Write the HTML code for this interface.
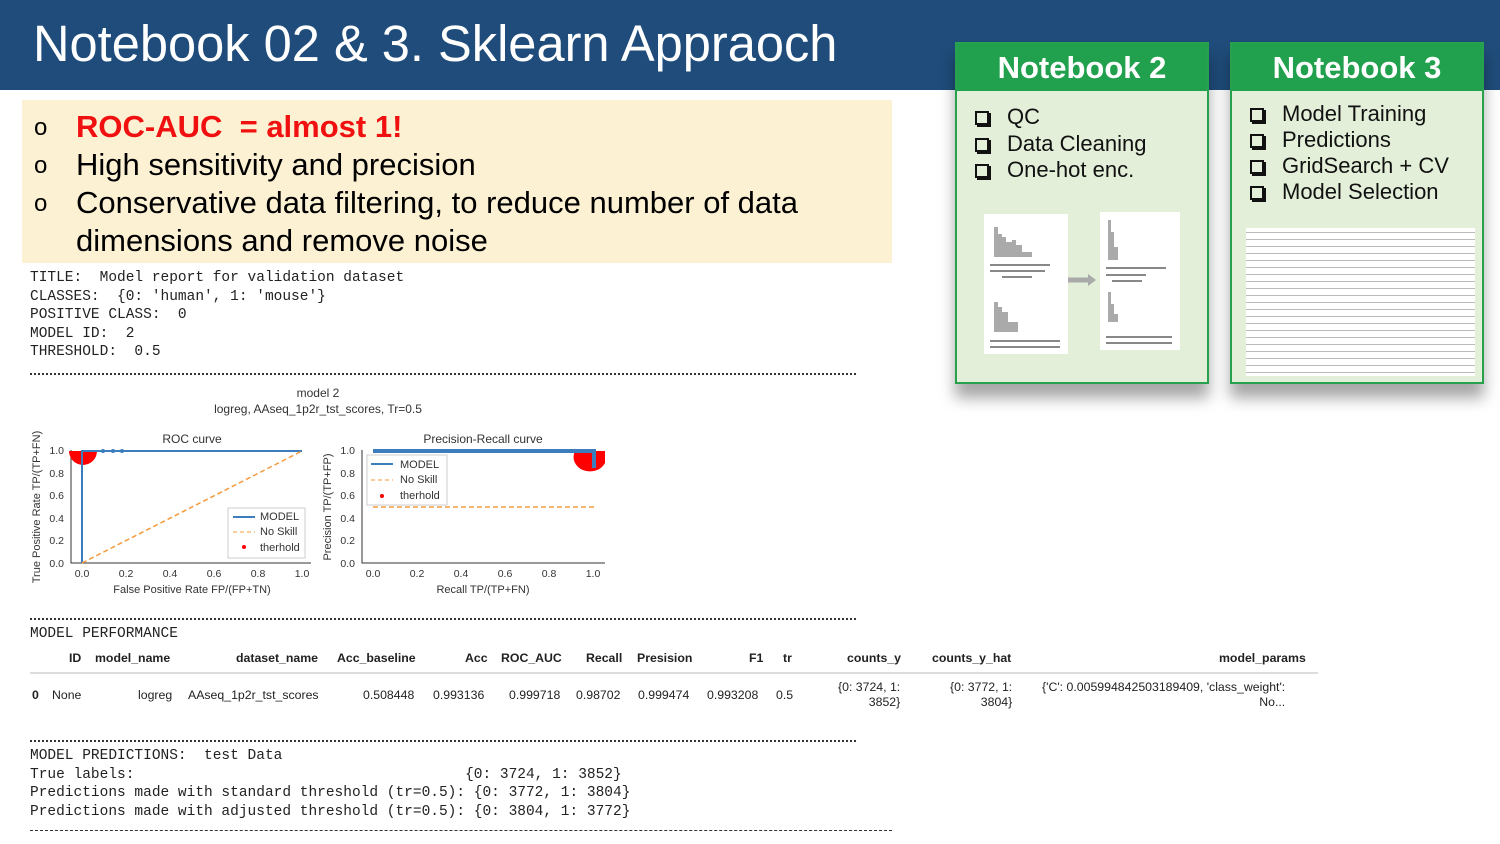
<!DOCTYPE html>
<html><head><meta charset="utf-8"><style>
*{margin:0;padding:0;box-sizing:border-box}
body{width:1500px;height:844px;background:#fff;position:relative;overflow:hidden;font-family:"Liberation Sans",sans-serif}
.abs{position:absolute}
.bar{left:0;top:0;width:1500px;height:90px;background:#1f4c7a}
.title{left:33px;top:14px;color:#fff;font-size:50.6px;white-space:nowrap}
.yel{left:22px;top:100px;width:870px;height:163px;background:#fdf1d3}
.bl{font-size:31px;color:#000;white-space:nowrap}
.mono{font-family:"Liberation Mono",monospace;font-size:14.5px;color:#222;white-space:pre;line-height:18.5px}
.dots{height:0;border-top:2px dotted #333}
.nb{background:#e3efd9;border:2px solid #27a14e;box-shadow:0 14px 14px rgba(0,0,0,.35)}
.nbh{background:#21a04d;color:#fff;font-weight:bold;font-size:31px;text-align:center;height:47px;line-height:47px}
.it{font-size:22px;color:#111;white-space:nowrap;line-height:26px}
.it span{display:inline-block;width:14px;height:14px;border:2px solid #111;box-shadow:2px 2px 0 #111;margin-right:18px;vertical-align:-1px}
.t{font-size:12.3px;color:#222;white-space:nowrap}
.th{font-weight:bold}
</style></head><body>
<div class="abs bar"></div>
<div class="abs title">Notebook 02 &amp; 3. Sklearn Appraoch</div>
<div class="abs yel"></div>
<div class="abs bl" style="left:34px;top:114px;font-size:24px">o</div>
<div class="abs bl" style="left:76px;top:109px;color:#f01010;font-weight:bold">ROC-AUC&nbsp; = almost 1!</div>
<div class="abs bl" style="left:34px;top:152px;font-size:24px">o</div>
<div class="abs bl" style="left:76px;top:147px">High sensitivity and precision</div>
<div class="abs bl" style="left:34px;top:190px;font-size:24px">o</div>
<div class="abs bl" style="left:76px;top:185px">Conservative data filtering, to reduce number of data</div>
<div class="abs bl" style="left:76px;top:223px">dimensions and remove noise</div>

<div class="abs mono" style="left:30px;top:269px">TITLE:  Model report for validation dataset
CLASSES:  {0: 'human', 1: 'mouse'}
POSITIVE CLASS:  0
MODEL ID:  2
THRESHOLD:  0.5</div>
<div class="abs dots" style="left:30px;top:373px;width:826px"></div>

<svg class="abs" style="left:0;top:380px" width="620" height="220" font-family="Liberation Sans" font-size="11" fill="#333">
<text x="318" y="17" text-anchor="middle" font-size="12">model 2</text>
<text x="318" y="33" text-anchor="middle" font-size="12">logreg, AAseq_1p2r_tst_scores, Tr=0.5</text>
<text x="192" y="63" text-anchor="middle" font-size="12">ROC curve</text>
<text x="483" y="63" text-anchor="middle" font-size="12">Precision-Recall curve</text>
<g stroke="#333" fill="none"><path d="M71 70V183H311"/><path d="M362 70V183H605"/></g>
<g font-size="10.5" text-anchor="end">
<text x="64" y="74">1.0</text><text x="64" y="97">0.8</text><text x="64" y="119">0.6</text><text x="64" y="142">0.4</text><text x="64" y="164">0.2</text><text x="64" y="187">0.0</text>
<text x="355" y="74">1.0</text><text x="355" y="97">0.8</text><text x="355" y="119">0.6</text><text x="355" y="142">0.4</text><text x="355" y="164">0.2</text><text x="355" y="187">0.0</text></g>
<g font-size="10.5" text-anchor="middle">
<text x="82" y="197">0.0</text><text x="126" y="197">0.2</text><text x="170" y="197">0.4</text><text x="214" y="197">0.6</text><text x="258" y="197">0.8</text><text x="302" y="197">1.0</text>
<text x="373" y="197">0.0</text><text x="417" y="197">0.2</text><text x="461" y="197">0.4</text><text x="505" y="197">0.6</text><text x="549" y="197">0.8</text><text x="593" y="197">1.0</text></g>
<text x="192" y="213" text-anchor="middle">False Positive Rate  FP/(FP+TN)</text>
<text x="483" y="213" text-anchor="middle">Recall TP/(TP+FN)</text>
<text transform="translate(40,127) rotate(-90)" text-anchor="middle">True Positive Rate TP/(TP+FN)</text>
<text transform="translate(331,127) rotate(-90)" text-anchor="middle">Precision TP/(TP+FP)</text>
<path d="M69 71h28a14 14 0 0 1-28 0z" fill="#f00"/>
<path d="M575 71h30v12a16 14 0 0 1-30-12z" fill="#f00"/>
<path d="M82 183V71H302" stroke="#3b7dbd" stroke-width="2" fill="none"/>
<g fill="#3b7dbd"><circle cx="103" cy="71" r="2"/><circle cx="113" cy="71" r="2"/><circle cx="122" cy="71" r="2"/></g>
<path d="M82 183L302 71" stroke="#f59a3c" stroke-width="1.5" stroke-dasharray="5 3"/>
<path d="M373 71H594V88" stroke="#3b7dbd" stroke-width="4" fill="none"/>
<path d="M373 127H594" stroke="#f59a3c" stroke-width="1.5" stroke-dasharray="5 3"/>
<rect x="228" y="128" width="77" height="50" fill="#fff" stroke="#ccc"/>
<path d="M233 137h22" stroke="#3b7dbd" stroke-width="2"/><path d="M233 152h22" stroke="#f59a3c" stroke-dasharray="4 3"/><circle cx="244" cy="167" r="2" fill="#f00"/>
<text x="260" y="140">MODEL</text><text x="260" y="155">No Skill</text><text x="260" y="171">therhold</text>
<rect x="367" y="75" width="80" height="50" fill="#fff" stroke="#ccc"/>
<path d="M371 84h22" stroke="#3b7dbd" stroke-width="2"/><path d="M371 100h22" stroke="#f59a3c" stroke-dasharray="4 3"/><circle cx="382" cy="116" r="2" fill="#f00"/>
<text x="400" y="88">MODEL</text><text x="400" y="103">No Skill</text><text x="400" y="119">therhold</text>
</svg>

<div class="abs dots" style="left:30px;top:618px;width:826px"></div>
<div class="abs mono" style="left:30px;top:625px">MODEL PERFORMANCE</div>
<div class="abs t th" style="left:69px;top:651px">ID</div>
<div class="abs t th" style="left:95px;top:651px">model_name</div>
<div class="abs t th" style="left:236px;top:651px">dataset_name</div>
<div class="abs t th" style="left:337px;top:651px">Acc_baseline</div>
<div class="abs t th" style="left:465px;top:651px">Acc</div>
<div class="abs t th" style="left:501px;top:651px">ROC_AUC</div>
<div class="abs t th" style="left:586px;top:651px">Recall</div>
<div class="abs t th" style="left:637px;top:651px">Presision</div>
<div class="abs t th" style="left:749px;top:651px">F1</div>
<div class="abs t th" style="left:783px;top:651px">tr</div>
<div class="abs t th" style="left:847px;top:651px">counts_y</div>
<div class="abs t th" style="left:932px;top:651px">counts_y_hat</div>
<div class="abs t th" style="left:1219px;top:651px">model_params</div>
<div class="abs" style="left:30px;top:672px;width:1288px;height:2px;background:#ddd"></div>
<div class="abs t th" style="left:32px;top:688px">0</div>
<div class="abs t" style="left:52px;top:688px">None</div>
<div class="abs t" style="left:138px;top:688px">logreg</div>
<div class="abs t" style="left:188px;top:688px">AAseq_1p2r_tst_scores</div>
<div class="abs t" style="left:363px;top:688px">0.508448</div>
<div class="abs t" style="left:433px;top:688px">0.993136</div>
<div class="abs t" style="left:509px;top:688px">0.999718</div>
<div class="abs t" style="left:576px;top:688px">0.98702</div>
<div class="abs t" style="left:638px;top:688px">0.999474</div>
<div class="abs t" style="left:707px;top:688px">0.993208</div>
<div class="abs t" style="left:776px;top:688px">0.5</div>
<div class="abs t" style="left:838px;top:680px;text-align:right;line-height:15px">{0: 3724, 1:<br>3852}</div>
<div class="abs t" style="left:950px;top:680px;text-align:right;line-height:15px">{0: 3772, 1:<br>3804}</div>
<div class="abs t" style="left:1042px;top:680px;text-align:right;line-height:15px">{'C': 0.005994842503189409, 'class_weight':<br>No...</div>

<div class="abs dots" style="left:30px;top:740px;width:826px"></div>
<div class="abs mono" style="left:30px;top:747px">MODEL PREDICTIONS:  test Data
True labels:                                      {0: 3724, 1: 3852}
Predictions made with standard threshold (tr=0.5): {0: 3772, 1: 3804}
Predictions made with adjusted threshold (tr=0.5): {0: 3804, 1: 3772}</div>
<div class="abs" style="left:30px;top:830px;width:862px;border-top:1px dashed #333"></div>

<div class="abs nb" style="left:955px;top:42px;width:254px;height:342px">
<div class="nbh">Notebook 2</div>
<div class="abs it" style="left:18px;top:60px"><span></span>QC</div>
<div class="abs it" style="left:18px;top:87px"><span></span>Data Cleaning</div>
<div class="abs it" style="left:18px;top:113px"><span></span>One-hot enc.</div>
<svg class="abs" style="left:25px;top:168px" width="200" height="142">
<rect x="2" y="2" width="84" height="140" fill="#fff"/>
<path d="M12 15h4v30h-4zM16 22h4v23h-4zM20 25h4v20h-4zM24 30h6v15h-6zM30 28h4v17h-4zM34 33h6v12h-6zM40 40h10v5h-10z" fill="#aaa"/>
<path d="M12 90h4v30h-4zM16 95h4v25h-4zM20 100h6v20h-6zM26 110h10v10h-10z" fill="#aaa"/>
<g fill="#888"><rect x="8" y="52" width="60" height="2"/><rect x="8" y="58" width="55" height="2"/><rect x="20" y="64" width="30" height="2"/><rect x="8" y="128" width="70" height="2"/><rect x="8" y="134" width="70" height="2"/></g>
<path d="M86 68h20" stroke="#aaa" stroke-width="5"/><path d="M106 62l8 6-8 6z" fill="#aaa"/>
<rect x="118" y="0" width="80" height="138" fill="#fff"/>
<path d="M126 8h3v40h-3zM129 20h3v28h-3zM132 35h4v13h-4z" fill="#aaa"/>
<path d="M126 80h3v30h-3zM129 92h3v18h-3zM132 102h4v8h-4z" fill="#aaa"/>
<g fill="#888"><rect x="124" y="55" width="60" height="2"/><rect x="124" y="62" width="40" height="2"/><rect x="130" y="68" width="30" height="2"/><rect x="124" y="124" width="66" height="2"/><rect x="124" y="130" width="66" height="2"/></g>
</svg>
</div>
<div class="abs nb" style="left:1230px;top:42px;width:254px;height:342px">
<div class="nbh">Notebook 3</div>
<div class="abs it" style="left:18px;top:57px"><span></span>Model Training</div>
<div class="abs it" style="left:18px;top:83px"><span></span>Predictions</div>
<div class="abs it" style="left:18px;top:109px"><span></span>GridSearch + CV</div>
<div class="abs it" style="left:18px;top:135px"><span></span>Model Selection</div>
<div class="abs" style="left:14px;top:184px;width:229px;height:148px;background:#fff;background-image:repeating-linear-gradient(#fff 0 4px,#bbb 4px 5px,#fff 5px 7px)"></div>
</div>
</body></html>
